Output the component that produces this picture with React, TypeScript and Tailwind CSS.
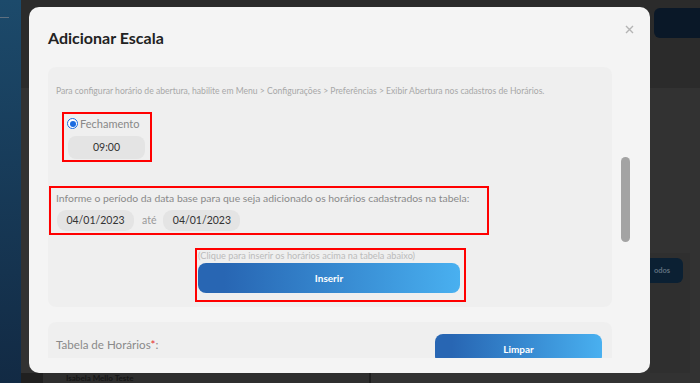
import React from 'react'

const font = { fontFamily: 'Lato, "Open Sans", sans-serif' }

function DateBox({ value }: { value: string }) {
  return (
    <div className="w-[77px] h-[21px] rounded-[9px] bg-[#e4e4e4] flex items-center justify-center text-[10.5px] text-[#333]">
      {value}
    </div>
  )
}

function Radio() {
  return (
    <span className="w-[11px] h-[11px] rounded-full border-[1.5px] border-[#1b6be0] bg-white flex items-center justify-center">
      <span className="w-[6px] h-[6px] rounded-full bg-[#1b6be0]" />
    </span>
  )
}

export default function App() {
  return (
    <div className="relative w-[700px] h-[383px] overflow-hidden bg-[#2a2a2a] flex" style={font}>
      {/* background page, dimmed */}
      <aside className="w-[21px] h-full bg-linear-to-b from-[#1c4a6b] to-[#122a44] pt-[17px]">
        <div className="w-[9px] h-px bg-[#5f7080]" />
      </aside>
      <div className="flex-1 flex flex-col">
        <div className="h-[88px] bg-[#2b2b2b] flex justify-end pt-[8px]">
          <div className="w-[46px] h-[30px] rounded-l-[6px] bg-[#0a1828]" />
        </div>
        <div className="flex-1 bg-[#323232] flex flex-col">
          <div className="flex justify-end pt-[165px] pr-[10px]">
            <div className="w-[40px] h-[120px] bg-[#2f2f2f] pt-[5px]">
              <div className="w-[33px] h-[25px] rounded-r-[6px] bg-[#0b2033] flex items-center pl-[4px] text-[7.5px] font-bold text-[#5f6f7e]">
                odos
              </div>
            </div>
          </div>
          <div className="mt-auto h-[10px] flex">
            <div className="w-[22px] bg-[#202020]" />
            <div className="w-[326px] bg-[#2e2e2e] pl-[23px] text-[8px] font-bold leading-[10px] text-[#161616]">
              Isabela Mello Teste
            </div>
            <div className="w-[2px] bg-[#1e1e1e]" />
          </div>
        </div>
      </div>

      {/* modal */}
      <div className="absolute left-[29px] top-[7px] w-[621px] h-[366px] rounded-[10px] bg-[#f4f4f4] flex flex-col">
        <div className="h-[60px] pl-[19px] pr-[16px] flex items-start justify-between">
          <h2 className="mt-[21px] text-[16px] font-bold text-[#222] leading-[20px]">Adicionar Escala</h2>
          <svg className="mt-[18px]" width="9" height="9" viewBox="0 0 9 9">
            <path d="M1 1L8 8M8 1L1 8" stroke="#b4b4b4" strokeWidth="1.4" />
          </svg>
        </div>

        <div className="h-[291px] pl-[19px] pr-[20px] flex gap-[9px]">
          <div className="w-[565px] overflow-hidden flex flex-col gap-[15px]">
            {/* horários */}
            <div className="shrink-0 h-[240px] rounded-[8px] bg-[#efefef] flex flex-col">
              <p className="mt-[18px] pl-[8px] text-[8.6px] leading-[12px] text-[#a8a8a8] whitespace-nowrap">
                Para configurar horário de abertura, habilite em Menu &gt; Configurações &gt; Preferências &gt; Exibir Abertura nos cadastros de Horários.
              </p>

              <div className="mt-[15px] ml-[14px] w-[90px] h-[50px] border-2 border-[#ff0000] pl-[3px] pt-[2px]">
                <label className="flex items-center gap-[2px] text-[11px] leading-[15px] text-[#888]">
                  <Radio />
                  Fechamento
                </label>
                <div className="mt-[5px] ml-[1px] w-[77px] h-[23px] rounded-[8px] bg-[#e4e4e4] flex items-center justify-center text-[10.5px] text-[#333]">
                  09:00
                </div>
              </div>

              <div className="mt-[24px] ml-[1px] w-[440px] h-[49px] border-2 border-[#ff0000] pl-[5px] pt-[3px]">
                <p className="text-[10.4px] leading-[14px] text-[#8a8a8a] whitespace-nowrap">
                  Informe o período da data base para que seja adicionado os horários cadastrados na tabela:
                </p>
                <div className="mt-[5px] ml-[1px] flex items-center">
                  <DateBox value="04/01/2023" />
                  <span className="ml-[8px] mr-[7px] text-[10.5px] text-[#999]">até</span>
                  <DateBox value="04/01/2023" />
                </div>
              </div>

              <div className="mt-[13px] ml-[147px] w-[271px] h-[54px] border-2 border-[#ff0000] pl-[1px]">
                <p className="text-[9.2px] leading-[12px] text-[#bbb] whitespace-nowrap">
                  (Clique para inserir os horários acima na tabela abaixo)
                </p>
                <button className="mt-[1px] w-[262px] h-[30px] rounded-[8px] bg-linear-to-r from-[#2866b3] from-10% to-[#49b0f0] text-[10px] font-bold text-white">
                  Inserir
                </button>
              </div>
            </div>

            {/* tabela */}
            <div className="shrink-0 h-[60px] rounded-[8px] bg-[#efefef] flex items-start justify-between pl-[8px] pr-[10px] pt-[12px]">
              <p className="mt-[3px] text-[11.6px] leading-[16px] text-[#8a8a8a]">
                Tabela de Horários<span className="text-[#e53030]">*</span>:
              </p>
              <button className="w-[167px] h-[30px] rounded-[8px] bg-linear-to-r from-[#2866b3] from-10% to-[#49b0f0] text-[10px] font-bold text-white">
                Limpar
              </button>
            </div>
          </div>

          {/* scrollbar */}
          <div className="w-[9px] pt-[90px]">
            <div className="w-[9px] h-[85px] rounded-full bg-[#a3a3a3]" />
          </div>
        </div>
      </div>
    </div>
  )
}
